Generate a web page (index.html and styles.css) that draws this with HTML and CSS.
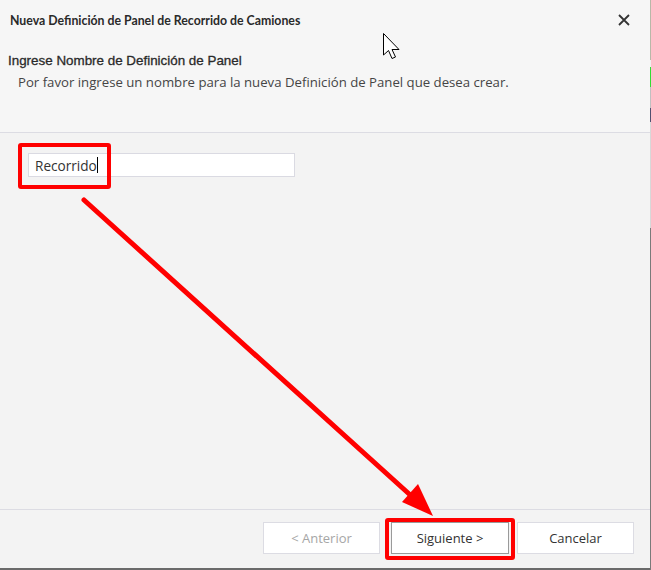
FILE: index.html
```html
<!DOCTYPE html>
<html>
<head>
<meta charset="utf-8">
<link rel="stylesheet" href="styles.css">
</head>
<body>
<div class="dialog">
  <div class="header">
    <div class="titlebar">
      <span class="title">Nueva Definición de Panel de Recorrido de Camiones</span>
      <span class="close">
        <svg width="12" height="12" viewBox="0 0 12 12"><path d="M1 1L11 11M11 1L1 11" stroke="#333" stroke-width="1.8" fill="none"/></svg>
      </span>
    </div>
    <h1 class="heading">Ingrese Nombre de Definición de Panel</h1>
    <p class="subtitle">Por favor ingrese un nombre para la nueva Definición de Panel que desea crear.</p>
  </div>
  <div class="content">
    <div class="field">
      <span class="value">Recorrido</span><span class="caret"></span>
    </div>
  </div>
  <div class="footer">
    <button class="btn disabled">&lt; Anterior</button>
    <button class="btn default">Siguiente &gt;</button>
    <button class="btn">Cancelar</button>
  </div>
  <div class="edge"></div>
</div>

<div class="mark mark-input"></div>
<div class="mark mark-next"></div>

<svg class="overlay" width="651" height="570" viewBox="0 0 651 570">
  <line x1="84" y1="200" x2="418" y2="502" stroke="#ff0000" stroke-width="5" stroke-linecap="round"/>
  <polygon points="433,516 402,502 418,484" fill="#ff0000"/>
  <path d="M383.5 33.5 L383.5 55 L388.5 50.5 L392 58.5 L395.5 57 L392 49.5 L399 49.5 Z" fill="#fff" stroke="#000" stroke-width="1" stroke-linejoin="round"/>
</svg>
</body>
</html>
```

FILE: styles.css
```css
html, body {
  margin: 0;
  padding: 0;
  width: 651px;
  height: 570px;
  overflow: hidden;
  background: #f3f3f3;
}

.dialog {
  position: relative;
  width: 651px;
  height: 570px;
  display: flex;
  flex-direction: column;
  font-family: "Open Sans", "Noto Sans", sans-serif;
  color: #222;
}

.header {
  background: #f6f6f6;
  border-bottom: 1px solid #dcdce3;
  box-sizing: border-box;
  height: 133px;
  padding-right: 1px;
}

.titlebar {
  display: flex;
  justify-content: space-between;
  align-items: center;
  height: 40px;
  padding: 0 20px 0 10px;
}

.title {
  font-family: Lato, "Noto Sans", sans-serif;
  font-weight: 700;
  font-size: 12.3px;
  color: #2a2a2a;
}

.close {
  display: flex;
  width: 12px;
  height: 12px;
}

.heading {
  margin: 12px 0 0 8px;
  font-family: "Liberation Sans", Arial, sans-serif;
  font-weight: 400;
  font-size: 13.4px;
  line-height: 18px;
  color: #2a2a2a;
  -webkit-text-stroke: 0.3px #2a2a2a;
}

.subtitle {
  margin: 4px 0 0 18px;
  font-family: "Open Sans", sans-serif;
  font-size: 13.2px;
  line-height: 17px;
  color: #454545;
}

.content {
  flex: 1;
  background: #f3f3f3;
  padding: 20px 0 0 28px;
}

.field {
  width: 267px;
  height: 24px;
  box-sizing: border-box;
  background: #fff;
  border: 1px solid #dadae2;
  display: flex;
  align-items: center;
  padding-left: 6px;
  font-family: "Open Sans", sans-serif;
  font-size: 13.6px;
  color: #333;
}

.caret {
  display: inline-block;
  width: 1px;
  height: 16px;
  background: #000;
}

.footer {
  height: 61px;
  box-sizing: border-box;
  border-top: 1px solid #dcdce3;
  border-bottom: 2px solid #6a6a6a;
  display: flex;
  justify-content: flex-end;
  align-items: flex-start;
  padding: 12px 17px 0 0;
  gap: 8px;
  background: #f3f3f3;
}

.btn {
  width: 117px;
  height: 32px;
  box-sizing: border-box;
  background: #fff;
  border: 1px solid #dcdce3;
  font-family: "Open Sans", sans-serif;
  font-size: 13px;
  color: #333;
  padding: 0;
}

.btn.disabled {
  color: #a6a6a6;
}

.btn.default {
  width: 118px;
  border: 1px solid #9a9a9a;
  margin-left: 3px;
}

.edge {
  position: absolute;
  right: 0;
  top: 0;
  width: 1px;
  height: 570px;
  background: linear-gradient(to bottom, #b8b8a8 0px, #b8b8a8 60px, #f0f0f0 60px, #f0f0f0 67px, #33dd33 67px, #33dd33 87px, #c0c0c0 87px, #c0c0c0 108px, #505070 108px, #505070 122px, #d8d8d8 122px, #d8d8d8 228px, #7a7a7a 228px);
}

.mark {
  position: absolute;
  border: 4px solid #ff0000;
  border-radius: 3px;
  box-sizing: border-box;
}

.mark-input {
  left: 18px;
  top: 143px;
  width: 93px;
  height: 46px;
}

.mark-next {
  left: 385px;
  top: 518px;
  width: 130px;
  height: 42px;
}

.overlay {
  position: absolute;
  left: 0;
  top: 0;
  pointer-events: none;
}
```
